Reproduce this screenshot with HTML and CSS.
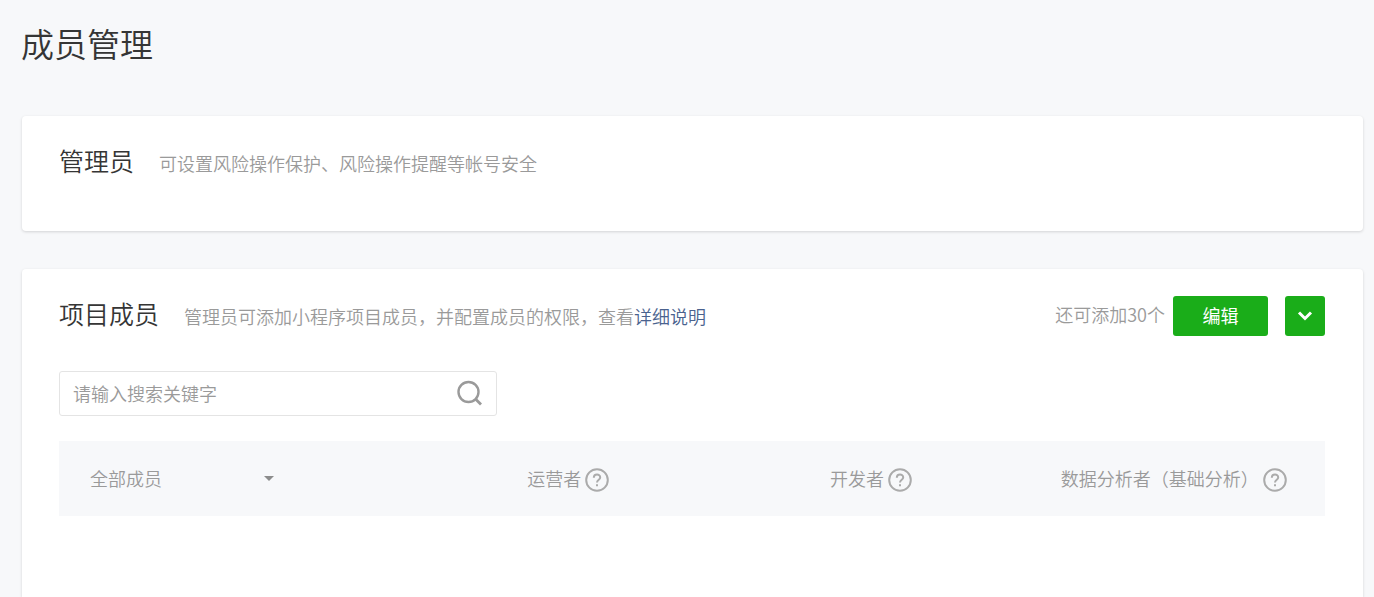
FILE: index.html
```html
<!DOCTYPE html>
<html lang="zh-CN">
<head>
    <meta charset="UTF-8">
    <meta name="viewport" content="width=device-width, initial-scale=1.0">
    <title>成员管理</title>
    <link rel="stylesheet" href="styles.css">
</head>
<body>

<h1 class="page-title">成员管理</h1>

<!-- 管理员 -->
<section class="card admin-card">
    <div class="card-header">
        <h2>管理员</h2>
        <p class="desc">可设置风险操作保护、风险操作提醒等帐号安全</p>
    </div>
</section>

<!-- 项目成员 -->
<section class="card member-card">
    <div class="card-header">
        <h2>项目成员</h2>
        <p class="desc">管理员可添加小程序项目成员，并配置成员的权限，查看<a href="#">详细说明</a></p>
        <div class="actions">
            <span class="quota">还可添加30个</span>
            <button class="btn btn-edit" type="button">编辑</button>
            <button class="btn btn-more" type="button" aria-label="更多">
                <svg width="16" height="12" viewBox="0 0 16 12"><path d="M2 2.500 8 8.500 14 2.500" fill="none" stroke="#fff" stroke-width="3"/></svg>
            </button>
        </div>
    </div>

    <form class="search-box">
        <input type="text" placeholder="请输入搜索关键字" aria-label="请输入搜索关键字">
        <button type="submit" aria-label="搜索">
            <svg width="28" height="28" viewBox="0 0 28 28" fill="none" stroke="#9a9a9a" stroke-width="2.400"><circle cx="12.500" cy="12" r="10"/><path d="M19.500 19 25 24.500" stroke-width="2.800"/></svg>
        </button>
    </form>

    <table class="member-table">
        <thead>
            <tr>
                <th class="col-member">
                    <div class="filter">
                        <select aria-label="成员筛选">
                            <option>全部成员</option>
                        </select>
                    </div>
                </th>
                <th>
                    <div class="role">运营者
                        <svg class="help" viewBox="0 0 24 24"><circle cx="12" cy="12" r="10.800"/><path d="M8.800 9.800C8.800 5.600 15.200 5.600 15.200 9.500C15.200 11.800 12 11.800 12 14.600M12 16.200V18.200"/></svg>
                    </div>
                </th>
                <th>
                    <div class="role">开发者
                        <svg class="help" viewBox="0 0 24 24"><circle cx="12" cy="12" r="10.800"/><path d="M8.800 9.800C8.800 5.600 15.200 5.600 15.200 9.500C15.200 11.800 12 11.800 12 14.600M12 16.200V18.200"/></svg>
                    </div>
                </th>
                <th>
                    <div class="role">数据分析者（基础分析）
                        <svg class="help" viewBox="0 0 24 24"><circle cx="12" cy="12" r="10.800"/><path d="M8.800 9.800C8.800 5.600 15.200 5.600 15.200 9.500C15.200 11.800 12 11.800 12 14.600M12 16.200V18.200"/></svg>
                    </div>
                </th>
            </tr>
        </thead>
    </table>
</section>

</body>
</html>
```

FILE: styles.css
```css
* {
    margin: 0;
    padding: 0;
    box-sizing: border-box;
}
body {
    display: flex;
    flex-direction: column;
    min-height: 100vh;
    padding: 18px 11px 0 21px;
    background-color: #f7f8fa;
    color: #353535;
    font-family: "Noto Sans CJK SC", sans-serif;
    font-size: 18px;
    font-weight: 350;
    line-height: 24px;
}
input,
select,
button {
    font: inherit;
}
.page-title {
    margin-bottom: 48px;
    font-size: 33px;
    font-weight: 350;
    line-height: 50px;
}
/* 卡片 */
.card {
    margin-left: 1px;
    padding: 27px 38px 0 37px;
    background-color: #fff;
    border-radius: 4px;
    box-shadow: 0 1px 3px rgba(0, 0, 0, 0.15);
}
.admin-card {
    margin-bottom: 38px;
    padding-bottom: 48px;
}
.member-card {
    flex: 1;
    padding-bottom: 40px;
    border-radius: 4px 4px 0 0;
}
.card-header {
    display: flex;
    align-items: flex-start;
    min-height: 40px;
}
.card-header h2 {
    margin-right: 25px;
    font-size: 25px;
    font-weight: 350;
    line-height: 34px;
}
.desc {
    padding-top: 3px;
    color: #9a9a9a;
    line-height: 34px;
}
.desc a {
    color: #4a628e;
    text-decoration: none;
}
/* 右侧操作区 */
.actions {
    display: flex;
    align-items: flex-start;
    margin-left: auto;
}
.quota {
    margin-right: 8px;
    color: #9a9a9a;
    line-height: 36px;
}
.btn {
    display: flex;
    align-items: center;
    justify-content: center;
    height: 40px;
    border: none;
    border-radius: 3px;
    background-color: #1aad19;
    color: #fff;
    cursor: pointer;
}
.btn-edit {
    width: 95px;
    margin-right: 17px;
    padding-bottom: 2px;
    font-weight: 400;
}
.btn-more {
    width: 40px;
}
/* 搜索框 */
.search-box {
    display: flex;
    align-items: center;
    width: 438px;
    height: 45px;
    margin-top: 35px;
    padding: 0 12px 0 13px;
    border: 1px solid #e4e4e4;
    border-radius: 3px;
}
.search-box input {
    flex: 1;
    padding-bottom: 2px;
    border: none;
    outline: none;
    background: none;
}
.search-box input::placeholder {
    color: #9a9a9a;
}
.search-box button {
    display: flex;
    border: none;
    background: none;
    cursor: pointer;
}
/* 成员表格 */
.member-table {
    width: 100%;
    margin-top: 25px;
    border-collapse: collapse;
    table-layout: fixed;
    background-color: #f7f8fa;
    color: #9a9a9a;
}
.member-table th {
    height: 75px;
    padding-bottom: 2px;
    font-weight: 350;
}
.member-table .col-member {
    width: 358px;
    padding-left: 31px;
}
.filter {
    position: relative;
    width: 184px;
}
.filter select {
    display: block;
    width: 100%;
    border: none;
    appearance: none;
    background: none;
    color: inherit;
}
.filter::after {
    content: "";
    position: absolute;
    top: 50%;
    right: 0;
    margin-top: -2px;
    border: 5px solid transparent;
    border-top-color: #8c8c8c;
    border-bottom: none;
    pointer-events: none;
}
.role {
    display: flex;
    align-items: center;
    justify-content: center;
    gap: 4px;
    white-space: nowrap;
}
.help {
    width: 24px;
    height: 24px;
    margin-top: 4px;
    fill: none;
    stroke: #ababab;
    stroke-width: 2;
}
```
